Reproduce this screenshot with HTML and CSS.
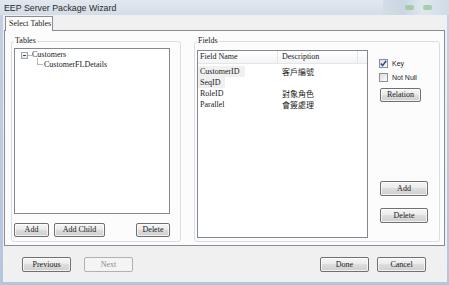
FILE: index.html
```html
<!DOCTYPE html>
<html>

<head>
	<meta charset="utf-8">
	<link rel="stylesheet" href="styles.css">
</head>

<body>
	<div class="window">
		<div class="titlebar">
			<span class="title">EEP Server Package Wizard</span>
			<div class="desk">
				<i class="ico ico1"></i>
				<i class="ico ico2"></i>
			</div>
		</div>
		<div class="client">
			<div class="tabstrip">
				<div class="tab">Select Tables</div>
			</div>
			<div class="panel">
				<div class="group tables">
					<div class="legend">Tables</div>
					<div class="tree">
						<div class="node root">
							<span class="exp"></span><span class="hline"></span><span class="label">Customers</span>
						</div>
						<div class="node child">
							<span class="elbow"></span><span class="label">CustomerFLDetails</span>
						</div>
					</div>
					<div class="btnrow">
						<button class="btn w35">Add</button>
						<button class="btn w51">Add Child</button>
						<button class="btn w34 push">Delete</button>
					</div>
				</div>
				<div class="group fields">
					<div class="legend">Fields</div>
					<div class="fieldbody">
						<div class="listview">
							<div class="lv-head">
								<div class="hcell c1">Field Name</div>
								<div class="hcell c2">Description</div>
								<div class="hcell c3"></div>
							</div>
							<div class="lv-rows">
								<div class="lv-row">
									<div class="cell c1"><span class="sel">CustomerID</span></div>
									<div class="cell c2">客戶編號</div>
								</div>
								<div class="lv-row">
									<div class="cell c1"><span class="sel">SeqID</span></div>
									<div class="cell c2"></div>
								</div>
								<div class="lv-row">
									<div class="cell c1">RoleID</div>
									<div class="cell c2">對象角色</div>
								</div>
								<div class="lv-row">
									<div class="cell c1">Parallel</div>
									<div class="cell c2">會簽處理</div>
								</div>
							</div>
						</div>
						<div class="side">
							<label class="check">
								<span class="box checked">
									<svg width="7" height="7" viewBox="0 0 7 7"><path d="M0.8 3.6 L2.6 5.6 L6.2 0.8" fill="none" stroke="#2d4a8c" stroke-width="1.5"/></svg>
								</span>
								<span class="ctext">Key</span>
							</label>
							<label class="check">
								<span class="box"></span>
								<span class="ctext">Not Null</span>
							</label>
							<button class="btn relation">Relation</button>
							<button class="btn side-btn push-down">Add</button>
							<button class="btn side-btn del">Delete</button>
						</div>
					</div>
				</div>
			</div>
			<div class="footer">
				<button class="btn nav">Previous</button>
				<button class="btn nav next" disabled>Next</button>
				<button class="btn nav done">Done</button>
				<button class="btn nav">Cancel</button>
			</div>
		</div>
	</div>
</body>

</html>
```

FILE: styles.css
```css
* {
	box-sizing: border-box;
}

body {
	margin: 0;
	width: 449px;
	height: 285px;
	overflow: hidden;
	font-family: "Liberation Serif", "Noto Sans CJK TC", serif;
	font-size: 8px;
	color: #1a1a1a;
}

.window {
	width: 449px;
	height: 285px;
	display: flex;
	flex-direction: column;
	background: linear-gradient(#c3d2e3, #b3c6db);
}

.titlebar {
	height: 15px;
	display: flex;
	align-items: center;
	padding-left: 4px;
	background: linear-gradient(#e1e8ef, #d4dde7);
	font-family: "Liberation Sans", sans-serif;
	font-size: 8.8px;
	color: #2a2a2a;
}

.desk {
	margin-left: auto;
	width: 66px;
	height: 15px;
	display: flex;
	align-items: center;
	gap: 9px;
	padding-left: 22px;
	background: linear-gradient(90deg, #d4dde7, #c9d6e3 30%, #dfe7ee 60%, #cfdbe6);
}

.ico {
	display: block;
	width: 9px;
	height: 5px;
	border-radius: 2px;
	background: #9cc79a;
	opacity: 0.8;
}

.client {
	flex: 1;
	margin: 0 2px 3px 3px;
	background: #f0f0f0;
	display: flex;
	flex-direction: column;
}

.tabstrip {
	height: 15px;
	padding: 1px 0 0 2px;
	display: flex;
}

.tab {
	position: relative;
	z-index: 1;
	width: 48px;
	height: 15px;
	margin-bottom: -1px;
	border: 1px solid #898c95;
	border-bottom: none;
	background: #fcfcfc;
	padding: 2px 0 0 3px;
	line-height: 10px;
}

.panel {
	height: 216px;
	margin: 0 2px 0 1px;
	border: 1px solid #898c95;
	background: #fcfcfc;
	display: flex;
	gap: 13px;
	padding: 10px 4px 3px 6px;
}

.group {
	height: 100%;
	border: 1px solid #d5dfe5;
	border-radius: 3px;
	display: flex;
	flex-direction: column;
}

.tables {
	width: 170px;
}

.fields {
	flex: 1;
}

.legend {
	width: fit-content;
	height: 10px;
	margin: -6px 0 0 2px;
	padding: 0 1px;
	line-height: 10px;
	background: #fcfcfc;
}

/* tree */
.tree {
	width: 156px;
	height: 166px;
	margin: 2px 0 0 2px;
	border: 1px solid #828790;
	background: #fff;
	padding-top: 1px;
}

.node {
	display: flex;
	align-items: center;
	height: 10px;
	line-height: 10px;
}

.exp {
	width: 7px;
	height: 7px;
	margin-left: 6px;
	border: 1px solid #a0a4ab;
	background: linear-gradient(#fff, #e3e5e8);
	display: flex;
	align-items: center;
	justify-content: center;
}

.exp::after {
	content: "";
	width: 3px;
	height: 1px;
	background: #3b4a5e;
}

.hline {
	width: 4px;
	height: 1px;
	background: #b8b8b8;
}

.child {
	align-items: flex-start;
}

.elbow {
	width: 6px;
	height: 7px;
	margin: -2px 0 0 22px;
	border-left: 1px solid #b8b8b8;
	border-bottom: 1px solid #b8b8b8;
}

.child .label {
	margin-left: 1px;
}

/* buttons */
.btn {
	height: 14px;
	padding: 0;
	border: 1px solid #707070;
	border-radius: 2px;
	background: linear-gradient(#f6f6f6 0%, #ebebeb 45%, #dddddd 50%, #cfcfcf 100%);
	font-family: "Liberation Serif", serif;
	font-size: 8px;
	line-height: 12px;
	color: #1a1a1a;
	box-shadow: inset 0 0 0 1px rgba(255, 255, 255, 0.7);
}

.btn[disabled] {
	border-color: #adb2b5;
	background: #f4f4f4;
	color: #8a8a8a;
	box-shadow: none;
}

.btnrow {
	display: flex;
	gap: 5px;
	margin-top: 9px;
	padding: 0 10px 0 2px;
}

.w35 {
	width: 35px;
}

.w51 {
	width: 51px;
}

.w34 {
	width: 34px;
}

.push {
	margin-left: auto;
}

/* list view */
.fieldbody {
	flex: 1;
	display: flex;
	gap: 11px;
	padding: 4px 0 3px 2px;
}

.listview {
	width: 171px;
	border: 1px solid #828790;
	background: #fff;
}

.lv-head {
	display: flex;
	height: 13px;
	border-bottom: 1px solid #e5e5e5;
	background: linear-gradient(#fff, #f3f4f6);
}

.hcell {
	height: 12px;
	line-height: 12px;
	border-right: 1px solid #e1e3e6;
}

.c1 {
	width: 80px;
	padding-left: 2px;
}

.c2 {
	width: 80px;
	padding-left: 4px;
}

.c3 {
	flex: 1;
	border-right: none;
}

.lv-rows {
	padding-top: 2px;
}

.lv-row {
	display: flex;
	height: 11px;
	line-height: 11px;
}

.cell.c2 {
	padding-left: 4px;
	font-family: "Noto Sans CJK TC", serif;
}

.sel {
	display: inline-block;
	margin-left: -2px;
	padding: 0 5px 0 2px;
	background: #f0f0f0;
}

/* side column */
.side {
	width: 50px;
	display: flex;
	flex-direction: column;
	align-items: flex-start;
	padding-bottom: 15px;
}

.check {
	display: flex;
	align-items: center;
	height: 9px;
	margin-bottom: 5px;
	font-family: "Liberation Sans", sans-serif;
	font-size: 7px;
	color: #1e1e1e;
}

.check:first-child {
	margin-top: 9px;
}

.box {
	width: 9px;
	height: 9px;
	border: 1px solid #8e8f8f;
	background: linear-gradient(135deg, #dcdcdc, #fbfbfb);
	display: flex;
	align-items: center;
	justify-content: center;
}

.box.checked {
	background: linear-gradient(135deg, #d8dfe9, #f7f9fb);
}

.ctext {
	margin-left: 4px;
}

.relation {
	width: 41px;
	margin: 1px 0 0 1px;
}

.side-btn {
	width: 48px;
	height: 15px;
	margin-left: 1px;
}

.push-down {
	margin-top: auto;
}

.del {
	margin-top: 12px;
}

/* footer */
.footer {
	flex: 1;
	display: flex;
	align-items: flex-start;
	padding: 11px 21px 0 19px;
}

.nav {
	width: 49px;
	height: 15px;
}

.next {
	margin-left: 13px;
}

.done {
	margin: 0 8px 0 auto;
}
```
